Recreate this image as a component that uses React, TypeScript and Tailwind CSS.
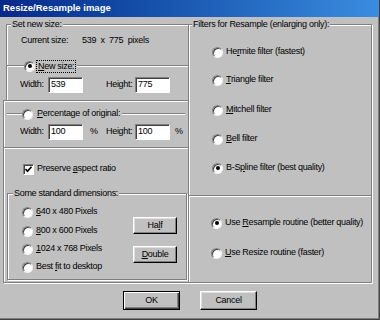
import React from 'react';

const font = "font-['Liberation_Sans',Arial,sans-serif]";
const etched = 'border border-[#808080] shadow-[inset_1px_1px_0_#fff,1px_1px_0_#fff]';
const line = 'h-[2px] border-t border-b border-t-[#808080] border-b-white';

function Radio({ checked = false }: { checked?: boolean }) {
  return (
    <span className="inline-flex h-[11px] w-[11px] shrink-0 items-center justify-center rounded-full border border-t-[#808080] border-l-[#808080] border-r-[#f0f0f0] border-b-[#f0f0f0] bg-white shadow-[inset_1px_1px_0_#404040]">
      {checked && <span className="h-[4px] w-[4px] rounded-full bg-black" />}
    </span>
  );
}

function M({ children }: { children: React.ReactNode }) {
  return <span className="underline underline-offset-[1px]">{children}</span>;
}

function Field({ value }: { value: string }) {
  return (
    <span className="flex h-[16px] w-[35px] items-center border border-t-[#808080] border-l-[#808080] border-r-white border-b-white bg-white pl-[2px] shadow-[inset_1px_1px_0_#404040]">
      {value}
    </span>
  );
}

function Btn({ children, w, def = false }: { children: React.ReactNode; w: string; def?: boolean }) {
  return (
    <div
      className={`${w} flex h-full items-center justify-center border ${
        def
          ? 'border-black shadow-[inset_1px_1px_0_#fff,inset_-1px_-1px_0_#404040,inset_-2px_-2px_0_#808080]'
          : 'border-t-white border-l-white border-r-black border-b-black shadow-[inset_-1px_-1px_0_#808080,inset_1px_1px_0_#dfdfdf]'
      }`}
    >
      {children}
    </div>
  );
}

function Option({ label, checked = false, mt }: { label: React.ReactNode; checked?: boolean; mt: string }) {
  return (
    <div className={`${mt} flex h-[12px] items-center gap-[3px]`}>
      <Radio checked={checked} />
      <span className="whitespace-nowrap">{label}</span>
    </div>
  );
}

export default function App() {
  return (
    <div
      className={`${font} flex h-[320px] w-[380px] flex-col overflow-hidden border-r border-b border-r-[#404040] border-b-[#404040] bg-[#c0c0c0] text-[9px] tracking-[-0.3px] text-black shadow-[inset_-1px_-1px_0_#808080]`}
    >
      <div className="flex h-[17px] shrink-0 items-center bg-linear-to-r from-[#08288a] to-[#3a8de0] pl-[3px] text-[9.5px] font-bold tracking-normal text-white">
        Resize/Resample image
      </div>

      <div className="flex pt-[7px]">
        {/* left column */}
        <div className="flex w-[189px] flex-col">
          <div className="relative ml-[6px] h-[76px] w-[183px] border border-b-0 border-[#808080] shadow-[inset_1px_1px_0_#fff]">
            <span className="absolute -top-[7px] left-[4px] bg-[#c0c0c0] px-[1px] leading-[12px]">Set new size:</span>
            <div className="mt-[10px] flex h-[12px] items-center pl-[14px]">
              <span className="w-[61px]">Current size:</span>
              <span className="whitespace-pre">539  x  775  pixels</span>
            </div>
            <div className={`relative mt-[18px] ${line}`}>
              <div className="absolute -top-[7px] left-[17px] flex h-[14px] items-center gap-[1px] bg-[#c0c0c0] pr-[1px]">
                <Radio checked />
                <span className="border border-dotted border-black px-[1px] leading-[11px]">
                  <M>N</M>ew size:
                </span>
              </div>
            </div>
            <div className="mt-[10px] flex h-[16px] items-center pl-[13px]">
              <span className="w-[28px]">Width:</span>
              <Field value="539" />
              <span className="ml-[23px] w-[29px]">Height:</span>
              <Field value="775" />
            </div>
          </div>

          <div className={`relative ml-[3px] h-[183px] w-[186px] ${etched}`}>
            <div className={`relative mx-[3px] mt-[12px] ${line}`}>
              <div className="absolute -top-[6px] left-[15px] flex h-[12px] items-center gap-[4px] bg-[#c0c0c0] pr-[2px]">
                <Radio />
                <span>
                  <M>P</M>ercentage of original:
                </span>
              </div>
            </div>
            <div className="mt-[9px] flex h-[16px] items-center pl-[16px]">
              <span className="w-[28px]">Width:</span>
              <Field value="100" />
              <span className="ml-[7px] w-[16px]">%</span>
              <span className="w-[29px]">Height:</span>
              <Field value="100" />
              <span className="ml-[5px]">%</span>
            </div>
            <div className={`mt-[7px] ${line}`} />
            <div className="mt-[14px] flex h-[12px] items-center gap-[3px] pl-[19px]">
              <span className="flex h-[11px] w-[11px] items-center justify-center border border-t-[#808080] border-l-[#808080] border-r-white border-b-white bg-white shadow-[inset_1px_1px_0_#404040]">
                <svg width="9" height="9" viewBox="0 0 9 9">
                  <path d="M1.5 4 L3.5 6.2 L7.5 1.8" fill="none" stroke="#000" strokeWidth="1.7" />
                </svg>
              </span>
              <span>
                Preserve <M>a</M>spect ratio
              </span>
            </div>
            <div className={`relative ml-[3px] mt-[18px] flex h-[87px] w-[180px] ${etched}`}>
              <span className="absolute -top-[7px] left-[5px] bg-[#c0c0c0] px-[1px] leading-[12px]">Some standard dimensions:</span>
              <div className="flex w-[111px] flex-col pl-[14px]">
                <Option mt="mt-[12px]" label={<><M>6</M>40 x 480 Pixels</>} />
                <Option mt="mt-[7px]" label={<><M>8</M>00 x 600 Pixels</>} />
                <Option mt="mt-[6px]" label={<><M>1</M>024 x 768 Pixels</>} />
                <Option mt="mt-[6px]" label={<>Best <M>f</M>it to desktop</>} />
              </div>
              <div className="ml-[14px] flex flex-col">
                <div className="mt-[23px] h-[17px]">
                  <Btn w="w-[44px]">
                    Ha<M>l</M>f
                  </Btn>
                </div>
                <div className="mt-[12px] h-[17px]">
                  <Btn w="w-[44px]">
                    <M>D</M>ouble
                  </Btn>
                </div>
              </div>
            </div>
          </div>
        </div>

        {/* right column */}
        <div className="relative h-[259px] w-[183px] border border-l-0 border-[#808080] shadow-[inset_1px_1px_0_#fff,1px_1px_0_#fff]">
          <span className="absolute -top-[7px] left-[3px] bg-[#c0c0c0] px-[1px] leading-[12px]">
            Filters for Resample (enlarging only):
          </span>
          <div className="flex flex-col pl-[23px]">
            <Option mt="mt-[21px]" label={<>He<M>r</M>mite filter (fastest)</>} />
            <Option mt="mt-[16px]" label={<><M>T</M>riangle filter</>} />
            <Option mt="mt-[18px]" label={<><M>M</M>itchell filter</>} />
            <Option mt="mt-[17px]" label={<><M>B</M>ell filter</>} />
            <Option mt="mt-[17px]" checked label={<>B-S<M>p</M>line filter (best quality)</>} />
          </div>
          <div className={`mt-[21px] ${line}`} />
          <div className="flex flex-col pl-[22px]">
            <Option mt="mt-[20px]" checked label={<>Use <M>R</M>esample routine (better quality)</>} />
            <Option mt="mt-[18px]" label={<><M>U</M>se Resize routine (faster)</>} />
          </div>
        </div>
      </div>

      <div className="mt-[8px] flex h-[19px] gap-[20px] pl-[123px]">
        <Btn w="w-[57px]" def>
          OK
        </Btn>
        <Btn w="w-[57px]">Cancel</Btn>
      </div>
    </div>
  );
}
